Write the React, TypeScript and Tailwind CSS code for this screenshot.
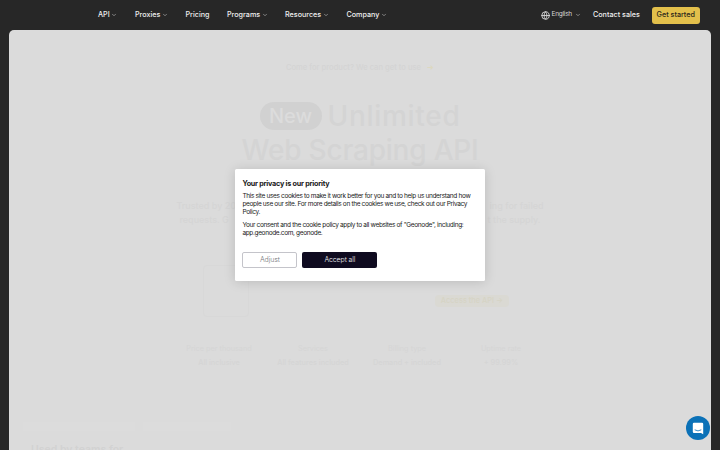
import { ChevronDown, Globe } from "lucide-react";

const links = [
  { label: "API", menu: true, width: "w-[37px]" },
  { label: "Proxies", menu: true, width: "w-[50.5px]" },
  { label: "Pricing", menu: false, width: "w-[41.5px]" },
  { label: "Programs", menu: true, width: "w-[58px]" },
  { label: "Resources", menu: true, width: "w-[61.5px]" },
  { label: "Company", menu: true, width: "w-[58px]" },
];

const features = [
  { title: "Price per thousand", value: "All inclusive" },
  { title: "Services", value: "All features included" },
  { title: "Billing type", value: "Demand + included" },
  { title: "Uptime rate", value: "+ 99.99%" },
];

function Header() {
  return (
    <header className="flex h-[30px] items-center bg-[#272727] pr-[20.5px] pl-[98px] text-[7.2px] font-medium text-[#f0f0f0]">
      <nav className="flex">
        {links.map((link) => (
          <a key={link.label} href="#" className={`flex items-center gap-[1.5px] pt-px whitespace-nowrap ${link.width}`}>
            {link.label}
            {link.menu && <ChevronDown size={6} strokeWidth={3} className="text-[#a0a0a0]" />}
          </a>
        ))}
      </nav>
      <div className="ml-auto flex items-center whitespace-nowrap">
        <button className="flex w-[52.5px] items-center text-[6.5px] font-normal tracking-[-0.25px] text-[#d6d6d6]">
          <Globe size={9} strokeWidth={2.4} className="mr-[2px]" />
          English
          <ChevronDown size={6} strokeWidth={3} className="ml-[3px] text-[#a0a0a0]" />
        </button>
        <a href="#" className="w-[59px] pt-px">Contact sales</a>
        <a href="#" className="flex h-[17px] w-[47.5px] items-center justify-center rounded-[3px] bg-[#e3c04b] text-[#29251a]">
          Get started
        </a>
      </div>
    </header>
  );
}

function Hero() {
  return (
    <main className="mx-[9px] flex h-[420px] flex-col items-center overflow-hidden rounded-t-[5px] bg-[#dbdbdb] text-[#d4d4d4]">
      <p className="mt-[32px] h-3 text-[7.6px] leading-3 font-medium">
        Come for product? We can get to use <span className="ml-1 text-[#dcd8c0]">➜</span>
      </p>
      <h1 className="mt-[25px] flex flex-col items-center text-[28px] leading-[34px] font-medium whitespace-nowrap">
        <span className="flex items-center gap-[6px]">
          <span className="flex h-[28px] w-[62px] items-center justify-center rounded-full bg-[#d1d1d1] text-[20px] text-[#dcdcdc]">New</span>
          <span className="tracking-[0.7px]">Unlimited</span>
        </span>
        <span className="tracking-[-0.2px]">Web Scraping API</span>
      </h1>
      <div className="mt-[32px] w-[367px] text-[9px] leading-[14px] font-medium whitespace-nowrap text-[#d5d5d5]">
        <p className="flex justify-between"><span>Trusted by 200</span><span>ing for failed</span></p>
        <p className="flex justify-between px-[3px]"><span>requests. G</span><span>t the supply.</span></p>
      </div>
      <div className="mt-[38px] flex w-[314px] items-end justify-between pr-[8px]">
        <div className="h-[52px] w-[46px] rounded-sm border border-[#d8d8d8]" />
        <div className="mb-[10px] flex h-3 w-[74px] items-center justify-center rounded-sm bg-[#dad9d3] text-[7.4px] font-medium text-[#d6d4c5]">
          Access the API →
        </div>
      </div>
      <div className="mt-[25px] grid w-[376px] grid-cols-4 text-center text-[7.3px] leading-[14px] whitespace-nowrap text-[#d5d5d5]">
        {features.map((item) => (
          <div key={item.title}>
            <p>{item.title}</p>
            <p className="font-medium">{item.value}</p>
          </div>
        ))}
      </div>
      <div className="mt-[52px] flex w-full gap-2 px-[14px]">
        <div className="h-[9px] w-[112px] bg-[#dcdcdc]" />
        <div className="h-[9px] w-[88px] bg-[#dcdcdc]" />
      </div>
      <p className="mt-[13px] w-full pl-[22px] text-[10.5px] leading-3 font-semibold text-[#d2d2d2]">Used by teams for</p>
    </main>
  );
}

function CookieDialog() {
  return (
    <section
      role="dialog"
      className="absolute top-[169px] left-[235px] h-[112px] w-[250px] rounded-[1.5px] bg-white px-[7.4px] pt-[10px] text-[6.5px] leading-[8.4px] tracking-[-0.345px] text-[#202020] shadow-[0_1px_12px_rgba(0,0,0,0.15)]"
    >
      <h2 className="text-[7.2px] leading-[9px] font-bold tracking-[-0.22px] text-[#171717]">Your privacy is our priority</h2>
      <p className="mt-[3.5px] whitespace-nowrap">
        This site uses cookies to make it work better for you and to help us understand how
        <br />
        people use our site. For more details on the cookies we use, check out our Privacy
        <br />
        Policy.
      </p>
      <p className="mt-[3.8px] whitespace-nowrap">
        Your consent and the cookie policy apply to all websites of "Geonode", including:
        <br />
        app.geonode.com, geonode.
      </p>
      <div className="mt-[15px] flex gap-[5px] text-[7px] tracking-[-0.1px]">
        <button className="h-[16px] w-[55px] rounded-[2px] border border-[#c4c4ca] font-light text-[#77777c]">Adjust</button>
        <button className="h-[16px] w-[75px] rounded-[2px] bg-[#0f0b20] font-light text-[#ededf2]">Accept all</button>
      </div>
    </section>
  );
}

function ChatButton() {
  return (
    <button className="absolute top-[416px] left-[686px] flex size-6 items-center justify-center rounded-full bg-[#0b71b7]">
      <svg viewBox="0 0 12 13" className="h-[13px] w-[12px]" fill="none">
        <path d="M2 .8h8a1.2 1.2 0 0 1 1.2 1.2v10.2L9 11H2A1.2 1.2 0 0 1 .8 9.8V2A1.2 1.2 0 0 1 2 .8Z" fill="#fff" />
        <path d="M3 8q3 2 6 0" stroke="#0b71b7" strokeWidth=".8" strokeLinecap="round" />
      </svg>
    </button>
  );
}

export default function App() {
  return (
    <div className="relative h-[450px] w-[720px] overflow-hidden bg-[#272727] font-['Inter','Liberation_Sans',sans-serif]">
      <Header />
      <Hero />
      <CookieDialog />
      <ChatButton />
    </div>
  );
}
